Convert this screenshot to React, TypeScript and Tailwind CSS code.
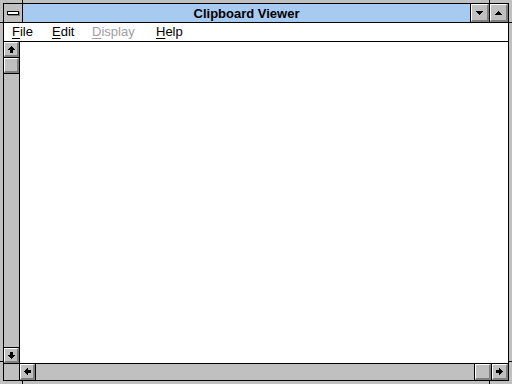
const btn =
  'bg-[#c0c0c0] border-t border-l border-white border-b-2 border-r-2 border-b-[#808080] border-r-[#808080] flex items-center justify-center'

function Arrow({ dir }: { dir: 'up' | 'down' | 'left' | 'right' }) {
  const rot = { up: 0, down: 180, left: 270, right: 90 }[dir]
  return (
    <svg width="7" height="7" viewBox="0 0 7 7" shapeRendering="crispEdges" style={{ transform: `rotate(${rot}deg)` }}>
      <path d="M3 0h1v1h1v1h1v1h1v1H5v3H2V4H0V3h1V2h1V1h1z" fill="#000" />
    </svg>
  )
}

function Tri({ up }: { up?: boolean }) {
  return (
    <svg width="7" height="4" viewBox="0 0 7 4" shapeRendering="crispEdges">
      {up ? (
        <path d="M3 0h1v1h1v1h1v1h1v1H0V3h1V2h1V1h1z" fill="#000" />
      ) : (
        <path d="M0 0h7v1H6v1H5v1H4v1H3V3H2V2H1V1H0z" fill="#000" />
      )}
    </svg>
  )
}

function MenuItem({ first, rest, disabled }: { first: string; rest: string; disabled?: boolean }) {
  return (
    <span className={disabled ? 'text-[#a0a0a0]' : 'text-black'}>
      <span className="underline underline-offset-2">{first}</span>
      {rest}
    </span>
  )
}

export default function App() {
  return (
    <div className="relative w-[512px] h-[384px] bg-[#c0c0c0] p-[3px] font-['Liberation_Sans',Arial,sans-serif] select-none">
      {/* frame corner marks */}
      <div className="absolute left-[22px] top-0 w-px h-[3px] bg-black" />
      <div className="absolute left-[489px] top-0 w-px h-[3px] bg-black" />
      <div className="absolute left-[22px] bottom-0 w-px h-[3px] bg-black" />
      <div className="absolute left-[489px] bottom-0 w-px h-[3px] bg-black" />
      <div className="absolute left-0 top-[22px] w-[3px] h-px bg-black" />
      <div className="absolute right-0 top-[22px] w-[3px] h-px bg-black" />
      <div className="absolute left-0 top-[361px] w-[3px] h-px bg-black" />
      <div className="absolute right-0 top-[361px] w-[3px] h-px bg-black" />

      <div className="w-full h-full border border-black flex flex-col bg-white">
        {/* caption */}
        <div className="h-[19px] flex border-b border-black shrink-0">
          <div className="w-[19px] bg-[#c0c0c0] border-r border-black flex items-center justify-center">
            <div className="w-[12px] h-[4px] bg-white border border-black shadow-[1px_1px_0_#808080]" />
          </div>
          <div className="flex-1 bg-[#a6caf0] flex items-center justify-center text-[13px] font-bold text-black leading-none">
            Clipboard Viewer
          </div>
          <div className="w-[19px] border-l border-black flex">
            <div className={`${btn} flex-1`}>
              <Tri />
            </div>
          </div>
          <div className="w-[19px] border-l border-black flex">
            <div className={`${btn} flex-1`}>
              <Tri up />
            </div>
          </div>
        </div>

        {/* menu */}
        <div className="h-[19px] flex items-center border-b border-black shrink-0 text-[13px] leading-none pl-[8px] pb-[2px]">
          <div className="w-[40px]">
            <MenuItem first="F" rest="ile" />
          </div>
          <div className="w-[40px]">
            <MenuItem first="E" rest="dit" />
          </div>
          <div className="w-[64px]">
            <MenuItem first="D" rest="isplay" disabled />
          </div>
          <div>
            <MenuItem first="H" rest="elp" />
          </div>
        </div>

        {/* body */}
        <div className="flex-1 flex flex-col min-h-0">
          <div className="flex-1 flex min-h-0">
            <div className="w-[16px] bg-[#c0c0c0] border-r border-black flex flex-col">
              <div className="h-[16px] border-b border-black flex">
                <div className={`${btn} flex-1`}>
                  <Arrow dir="up" />
                </div>
              </div>
              <div className="h-[16px] border-b border-black flex">
                <div className={`${btn} flex-1`} />
              </div>
              <div className="flex-1" />
              <div className="h-[16px] border-t border-black flex">
                <div className={`${btn} flex-1`}>
                  <Arrow dir="down" />
                </div>
              </div>
            </div>
            <div className="flex-1 bg-white" />
          </div>
          <div className="h-[17px] border-t border-black flex bg-[#c0c0c0] shrink-0">
            <div className="w-[16px] border-r border-black" />
            <div className="w-[16px] border-r border-black flex">
              <div className={`${btn} flex-1`}>
                <Arrow dir="left" />
              </div>
            </div>
            <div className="flex-1" />
            <div className="w-[17px] border-l border-black flex">
              <div className={`${btn} flex-1`} />
            </div>
            <div className="w-[17px] border-l border-black flex">
              <div className={`${btn} flex-1`}>
                <Arrow dir="right" />
              </div>
            </div>
          </div>
        </div>
      </div>
    </div>
  )
}
